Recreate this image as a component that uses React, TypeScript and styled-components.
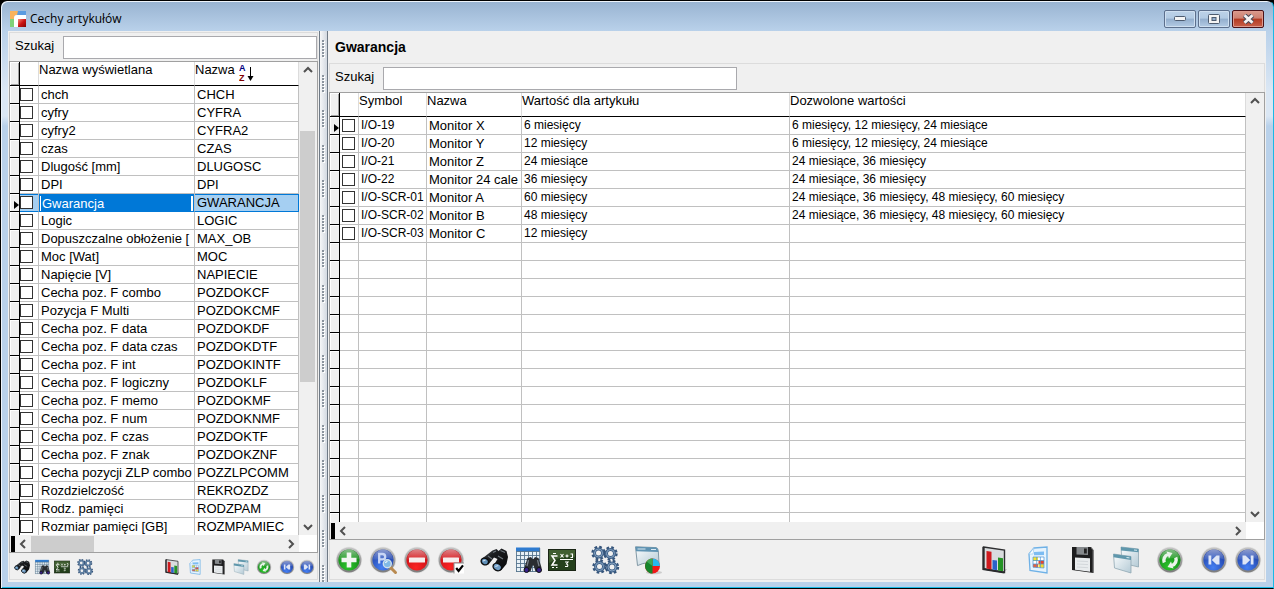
import React from "react";
import styled, { createGlobalStyle, css } from "styled-components";

const SANS = '"Liberation Sans", Arial, sans-serif';

const GlobalStyle = createGlobalStyle`
  * { box-sizing: border-box; }
  body { margin: 0; background: #000; font-family: ${SANS}; font-size: 13px; color: #000; }
  button, input { font: inherit; color: inherit; padding: 0; margin: 0; }
  button { cursor: pointer; }
`;

/* ---------- window frame ---------- */

const Window = styled.main`
  height: 100vh;
  display: flex;
  flex-direction: column;
  padding: 0 7px 6px 7px;
  border: 1px solid #000;
  border-right-color: #19b9e6;
  border-radius: 7px 7px 0 0;
  box-shadow: inset 1px 1px 0 #eef4fb, inset 0 -1px 0 #19b9e6;
  background: linear-gradient(#98b3d1 0, #b9d1ea 30px, #dbe7f4 90px, #dbe7f4 115px, #b9d1ea 125px);
`;

const TitleBar = styled.header`
  flex: none;
  height: 30px;
  display: flex;
  align-items: center;
  gap: 4px;
  padding: 6px 2px 0 2px;
`;

const Title = styled.h1`
  flex: 1;
  margin: 0;
  font: 400 12px/18px "Open Sans", "Noto Sans", sans-serif;
`;

const WindowControls = styled.div`
  display: flex;
  gap: 2px;
`;

const WindowButton = styled.button<{ $danger?: boolean }>`
  width: 32px;
  height: 18px;
  display: flex;
  align-items: center;
  justify-content: center;
  border: 1px solid ${(p) => (p.$danger ? "#4b1218" : "#5c6f8c")};
  border-radius: 2px;
  box-shadow: inset 0 0 0 1px ${(p) => (p.$danger ? "#dd9a8e" : "#cfdff0")};
  background: ${(p) =>
    p.$danger
      ? "linear-gradient(#d99a8c 0, #cf8171 45%, #b33a22 50%, #c8604a 100%)"
      : "linear-gradient(#bdd2e8 0, #b2cae3 45%, #93aecd 50%, #b3cbe4 100%)"};
`;

const Body = styled.div`
  flex: 1;
  min-height: 0;
  display: flex;
  background: #f0f0f0;
`;

const Pane = styled.section<{ $side?: boolean }>`
  display: flex;
  flex-direction: column;
  min-width: 0;
  min-height: 0;
  padding: ${(p) => (p.$side ? "1px 1px 2px" : "0 1px 2px")};
  ${(p) => (p.$side ? "flex: none; width: 311px;" : "flex: 1;")}
`;

const Splitter = styled.div`
  flex: none;
  width: 9px;
  border: solid #6f7a86;
  border-width: 0 1px;
  background: linear-gradient(90deg, #f6f7f8, #d3d9e1);
  svg { display: block; width: 100%; height: 100%; }
`;

const PaneTitle = styled.h2`
  flex: none;
  height: 32px;
  margin: 0;
  padding: 0 6px;
  font: 700 14px/32px ${SANS};
`;

const SearchRow = styled.form<{ $side?: boolean }>`
  flex: none;
  display: flex;
  align-items: center;
  gap: 8px;
  height: 29px;
  padding-left: 5px;
  border: 1px solid #dcdcdc;
  border-bottom: 0;
  label { padding-bottom: 3px; line-height: 20px; font-size: 13px; width: 40px; white-space: nowrap; }
  input {
    ${(p) => (p.$side ? "flex: 1; min-width: 0;" : "width: 354px;")}
    height: 23px;
    padding: 0 4px;
    border: 1px solid #a9a9ad;
    border-radius: 0;
    background: #fff;
    outline: none;
  }
`;

/* ---------- data grid ---------- */

const GridFrame = styled.div`
  flex: 1;
  min-height: 0;
  display: grid;
  grid-template-columns: minmax(0, 1fr) 18px;
  grid-template-rows: minmax(0, 1fr) 17px;
  border: 1px solid #a0a0a0;
  background: #f0f0f0;
`;

const GridViewport = styled.div`
  overflow: hidden;
  background: #fff;
`;

const Table = styled.table`
  width: 100%;
  table-layout: fixed;
  border-collapse: separate;
  border-spacing: 0;
`;

const Head = styled.th<{ $gutter?: boolean }>`
  height: 24px;
  padding: 0;
  border-bottom: 1px solid #000;
  border-right: 1px solid #dcdcdc;
  font-weight: 400;
  line-height: 16px;
  text-align: left;
  vertical-align: top;
  white-space: nowrap;
  ${(p) =>
    p.$gutter &&
    css`
      background: #f0f0f0;
      border-right-color: #000;
      box-shadow: inset 1px 1px 0 #fff, inset -1px -1px 0 #a0a0a0;
    `}
`;

const HeadLabel = styled.span`
  display: flex;
  align-items: flex-start;
  gap: 4px;
  svg { margin-top: 2px; }
`;

const Cell = styled.td<{ $small?: boolean }>`
  height: 18px;
  padding: 0 0 0 2px;
  border-right: 1px solid #c0c0c0;
  border-bottom: 1px solid #c0c0c0;
  font-size: ${(p) => (p.$small ? "12px" : "13px")};
  line-height: 17px;
  white-space: nowrap;
  overflow: hidden;
`;

const GutterCell = styled.td`
  height: 18px;
  padding: 0;
  border-right: 1px solid #000;
  border-bottom: 1px solid #000;
  background: #f0f0f0;
  box-shadow: inset 1px 1px 0 #fff;
  svg { display: block; margin: 5px 0 0 4px; }
`;

const CheckCell = styled(Cell)<{ $inset?: boolean }>`
  padding: 0 0 0 ${(p) => (p.$inset ? "2px" : "0")};
`;

const Row = styled.tr<{ $selected?: boolean }>`
  ${(p) =>
    p.$selected &&
    css`
      ${Cell} {
        background: #a5cff2;
        border-bottom-color: #0078d7;
        box-shadow: inset 0 1px 0 #0078d7;
      }
      ${Cell}:nth-child(3) {
        background: #0078d7;
        color: #fff;
      }
      ${Cell}:last-child { border-right-color: #0078d7; }
    `}
`;

const EditCell = styled(Cell)`
  padding: 0 0 0 1px;
`;

const EditMark = styled.span`
  display: block;
  height: 15px;
  margin: 1px 1px 0 0;
  border: solid #fff;
  border-width: 0 2px 0 1px;
  padding-left: 1px;
  line-height: 16px;
`;

const Check = styled.input`
  appearance: none;
  display: block;
  width: 13px;
  height: 13px;
  border: 1px solid #333;
  border-radius: 0;
  background: #fff;
`;

/* ---------- scroll bars ---------- */

const VBar = styled.div`
  display: flex;
  flex-direction: column;
  padding: 0 1px;
  background: #f0f0f0;
`;

const HBar = styled.div`
  display: flex;
  align-items: stretch;
  padding: 1px 0 0 1px;
  background: #f0f0f0;
  &::before { content: ""; width: 4px; background: #000; }
`;

const Corner = styled.div`
  background: #fff;
`;

const BarButton = styled.button`
  flex: none;
  width: 16px;
  height: 16px;
  display: flex;
  align-items: center;
  justify-content: center;
  border: 0;
  background: transparent;
`;

const Track = styled.div<{ $axis: "x" | "y"; $before: number; $thumb: number }>`
  flex: 1;
  display: grid;
  ${(p) =>
    p.$axis === "y"
      ? `grid-template-rows: ${p.$before}fr ${p.$thumb}fr ${100 - p.$before - p.$thumb}fr;`
      : `grid-template-columns: ${p.$before}fr ${p.$thumb}fr ${100 - p.$before - p.$thumb}fr;`}
`;

const Thumb = styled.div<{ $axis: "x" | "y" }>`
  background: #cdcdcd;
  ${(p) => (p.$axis === "y" ? "grid-row: 2; margin-right: 1px;" : "grid-column: 2;")}
`;

/* ---------- toolbars ---------- */

const Toolbar = styled.div<{ $side?: boolean }>`
  flex: none;
  display: flex;
  align-items: center;
  justify-content: space-between;
  height: ${(p) => (p.$side ? "27px" : "40px")};
  padding: ${(p) => (p.$side ? "1px 2px 0 4px" : "0 2px 0 5px")};
  border: 1px solid #dcdcdc;
  border-top: 0;
`;

const ToolSet = styled.div<{ $gap: number }>`
  display: flex;
  align-items: center;
  gap: ${(p) => p.$gap}px;
`;

const ToolButton = styled.button<{ $size: number }>`
  width: ${(p) => p.$size}px;
  height: ${(p) => p.$size}px;
  border: 0;
  background: transparent;
  svg { display: block; width: 100%; height: 100%; overflow: visible; }
`;

/* ---------- drawings ---------- */

const Hidden = styled.svg`
  position: absolute;
  width: 0;
  height: 0;
`;

const Defs = () => (
  <Hidden aria-hidden="true">
    <defs>
      <linearGradient id="ring" x1="0" y1="0" x2="0" y2="1">
        <stop offset="0" stopColor="#c4c4c4" />
        <stop offset="1" stopColor="#7c7c7c" />
      </linearGradient>
      <radialGradient id="green" cx=".45" cy=".8" r=".8">
        <stop offset="0" stopColor="#2cc42c" />
        <stop offset="1" stopColor="#0d7d12" />
      </radialGradient>
      <radialGradient id="blue" cx=".45" cy=".85" r=".85">
        <stop offset="0" stopColor="#457ff2" />
        <stop offset="1" stopColor="#1b389c" />
      </radialGradient>
      <radialGradient id="red" cx=".45" cy=".85" r=".85">
        <stop offset="0" stopColor="#fb2424" />
        <stop offset="1" stopColor="#bd0a12" />
      </radialGradient>
      <linearGradient id="gloss" x1="0" y1="0" x2="0" y2="1">
        <stop offset="0" stopColor="#fff" stopOpacity=".5" />
        <stop offset="1" stopColor="#fff" stopOpacity=".08" />
      </linearGradient>
      <linearGradient id="pane" x1="0" y1="0" x2="1" y2="1">
        <stop offset="0" stopColor="#fbfdfe" />
        <stop offset="1" stopColor="#b4cad5" />
      </linearGradient>
      <linearGradient id="barrel" x1="0" y1="0" x2="1" y2="1">
        <stop offset="0" stopColor="#5b6369" />
        <stop offset=".35" stopColor="#1b1d20" />
        <stop offset="1" stopColor="#08090a" />
      </linearGradient>
      <linearGradient id="redcube" x1="0" y1="0" x2="1" y2="1">
        <stop offset="0" stopColor="#f58a7a" />
        <stop offset=".5" stopColor="#cc1414" />
        <stop offset="1" stopColor="#7d0505" />
      </linearGradient>
    </defs>
  </Hidden>
);

const Ball = ({ fill, children }: { fill: string; children?: React.ReactNode }) => (
  <svg viewBox="0 0 28 28">
    <circle cx="14" cy="14" r="13.2" fill="#e0e0e0" />
    <circle cx="14" cy="14" r="12.4" fill="url(#ring)" />
    <circle cx="14" cy="14" r="10.6" fill={`url(#${fill})`} />
    <path d="M4 13.5a10 10 0 0 1 20 0q-5-2.500-10-1t-10 1z" fill="url(#gloss)" />
    {children}
  </svg>
);

const Plus = () => (
  <Ball fill="green">
    <path d="M11.700 6.500h4.600v5.200h5.200v4.600h-5.200v5.200h-4.600v-5.200H6.500v-4.600h5.200z" fill="#f1f5f1" />
  </Ball>
);
const Preview = () => (
  <Ball fill="blue">
    <path d="M10.200 17.500V8h3.300a2.600 2.600 0 0 1 0 5.400h-3.300" fill="none" stroke="#c9d6f5" strokeWidth="2.300" />
    <path d="M21 21l5.500 5.500" stroke="#b98a50" strokeWidth="3" strokeLinecap="round" />
    <circle cx="18.300" cy="17.800" r="4" fill="#7fb9e6" stroke="#cfe0ec" strokeWidth="1.400" />
    <path d="M16.500 17q.5-1.500 2-1.500" fill="none" stroke="#fff" strokeWidth="1.200" />
  </Ball>
);
const Minus = () => (
  <Ball fill="red">
    <rect x="6" y="11.500" width="16" height="5" rx=".6" fill="#f6eeee" />
  </Ball>
);
const MinusChecked = () => (
  <Ball fill="red">
    <rect x="6" y="11.500" width="16" height="5" rx=".6" fill="#f6eeee" />
    <rect x="17" y="17" width="10" height="10.500" fill="#fff" />
    <path d="M17 27.500V17h10" fill="none" stroke="#8a8a8a" />
    <path d="M19.200 22l2.400 3 4.400-5.600" fill="none" stroke="#000" strokeWidth="2.200" />
  </Ball>
);
const Binoculars = () => (
  <svg viewBox="0 0 28 28">
    <path d="M12.500 4.500l4-1.500 2 2 3-2.500 5 2.500 1.500 6-1.500 7-5 6-6-1-1-5 3-5-3.500-1.500-5.500 7-6-1.500-1-4z" fill="url(#barrel)" />
    <path d="M13 6.500l3-1.500M20.500 4.500l4.500 2M8 10l4 3M18 10l5 3" fill="none" stroke="#6d767d" strokeWidth="1.200" />
    <ellipse cx="4.800" cy="15.500" rx="3.800" ry="3.200" transform="rotate(28 4.800 15.500)" fill="#5f8fb8" stroke="#0c0d0e" strokeWidth="1.400" />
    <ellipse cx="17.300" cy="21" rx="4.400" ry="3.500" transform="rotate(28 17.300 21)" fill="#6f9cc4" stroke="#0c0d0e" strokeWidth="1.400" />
    <path d="M3 15l2.500-1M15.300 20.500l3-1" stroke="#cfe2f2" strokeWidth="1.200" />
  </svg>
);
const TableSearch = () => (
  <svg viewBox="0 0 28 28">
    <rect x="2" y="1.500" width="24" height="24" fill="#e8f1f7" />
    <rect x="2" y="1.500" width="24" height="4" fill="#2e7bd0" />
    <path d="M2 5.500h24M2 9.500h24M2 13.500h24M2 17.500h24M2 21.500h24M2 25.500h24M2.500 5v21M6.500 5v21M10.500 5v21M14.500 5v21M18.500 5v21M22.500 5v21M25.700 2v24" stroke="#56748c" strokeWidth=".9" />
    <path d="M13.500 12l3.500-1 1.500 2h1l1.500-2 3.500 1 3 9.500-1 4h-5l-2-6h-1l-2 6h-5l-1-4z" fill="#2a2d31" />
    <path d="M14.500 14l-1.500 6M23.500 14l1.500 6" stroke="#767e86" strokeWidth="1.300" />
    <circle cx="12.500" cy="24" r="2.500" fill="#37218a" stroke="#111" />
    <circle cx="25" cy="24" r="2.500" fill="#37218a" stroke="#111" />
  </svg>
);
const Board = () => (
  <svg viewBox="0 0 28 28">
    <rect x=".5" y="3.500" width="27" height="21" fill="#24401c" stroke="#1a2515" />
    <path d="M1 4h26v7Q14 9 1 17z" fill="#4d6b3b" opacity=".7" />
    <path d="M9.500 10H4l3 4.500L4 19h5.500" fill="none" stroke="#fff" strokeWidth="1.500" />
    <path d="M5 7.500h3M4 21.500h2M8 21.500h1.500M12 13.500h13" stroke="#fff" strokeWidth="1.200" />
    <path d="M12.500 8l3 3.500M15.500 8l-3 3.500M17.500 10h3M19 8.500v3M22.500 8h2v3.500h-2M17 16h3l-1.500 2q2 .5 1 2.500h-2.500" fill="none" stroke="#fff" strokeWidth="1.100" />
  </svg>
);
const Gear = ({ x, y }: { x: number; y: number }) => (
  <g transform={`translate(${x} ${y})`}>
    <circle r="6" fill="none" stroke="#35547a" strokeWidth="2.400" strokeDasharray="2.600 2.112" />
    <circle r="4" fill="none" stroke="#3f6188" strokeWidth="3" />
    <circle r="4" fill="none" stroke="#86a3c2" strokeWidth="1" />
  </g>
);
const Gears = () => (
  <svg viewBox="0 0 28 28">
    <Gear x={7.5} y={7} />
    <Gear x={19.5} y={7.5} />
    <Gear x={8.5} y={20.5} />
    <Gear x={21} y={21} />
  </svg>
);
const WindowPie = () => (
  <svg viewBox="0 0 28 28">
    <path d="M1.500 .8l20.500 .8q2 .3 2.300 3l.7 13q-11-3-21.500 2z" fill="url(#pane)" stroke="#8299a6" strokeWidth="1" />
    <path d="M1.500 .8l20.500 .8q2 .3 2.300 4.500L2 5.300z" fill="#5f93b2" />
    <path d="M3.500 3h8M17 3.500h5" stroke="#dcebf4" />
    <ellipse cx="20" cy="26.500" rx="8" ry="1.800" fill="#000" opacity=".15" />
    <circle cx="18.500" cy="20" r="7.500" fill="#f01818" />
    <path d="M18.500 20v-7.500a7.500 7.500 0 0 1 7.500 7.500z" fill="#25b9ee" />
    <path d="M18.500 20v7.500a7.500 7.500 0 0 1-7-10q2.500-5 7-5z" fill="#15852b" />
    <path d="M18.500 12.500v7.500l-6-4.500q2-3 6-3z" fill="#5cc06c" opacity=".6" />
  </svg>
);
const BarChart = () => (
  <svg viewBox="0 0 28 28">
    <path d="M22 24l5-1-3 4z" fill="#000" opacity=".2" />
    <path d="M3.500 1l21 3v22.500l-21-3.500z" fill="#d9dcde" stroke="#2e2e30" strokeWidth="1.400" />
    <path d="M3.500 1v22l21 3.500" fill="none" stroke="#29292b" strokeWidth="2.200" />
    <path d="M6.500 5l5 .7v17.800l-5-.9z" fill="#cf1a1e" />
    <path d="M12.500 14l4.500.6v9.700l-4.500-.7z" fill="#2b62c9" />
    <path d="M18 11.500l5 .7v13l-5-.7z" fill="#259325" />
  </svg>
);
const Sheet = () => (
  <svg viewBox="0 0 28 28">
    <path d="M10 2l13-1v26L6 24.500 5 8z" fill="#e6f3fd" stroke="#6fb1e6" strokeWidth="1.300" />
    <path d="M10 2L9 8H5z" fill="#fff" stroke="#9ccbf0" strokeWidth=".7" />
    <path d="M10 6l10-.5v3.500l-10 .3z" fill="#7cbcf2" />
    <path d="M9 11h11v11l-11-.8z" fill="#fff" />
    <path d="M9 11h5v4H9z" fill="#f7e32d" />
    <path d="M14.500 14.500H20v3.500h-5.500z" fill="#e8432c" />
    <path d="M9 18h5v3.500l-5-.3z" fill="#e8603c" />
    <path d="M14.500 18H20v4l-5.500-.4z" fill="#f7d92d" />
    <path d="M9 11h11v11l-11-.8zM9 14.500h11M9 18h11M12.700 11v10.500M16.400 11v10.800" fill="none" stroke="#4b93d3" strokeWidth=".7" />
  </svg>
);
const Floppy = () => (
  <svg viewBox="0 0 28 28">
    <path d="M4 1h19l2.500 3v23L4 24z" fill="#1d1d1e" />
    <path d="M8.500 1h11.500v8l-11.500-.5z" fill="#85898c" />
    <path d="M16 2.500h2.800v5H16z" fill="#222" />
    <path d="M7 11.500l15 .8v13.500l-15-2z" fill="#e9ecee" />
    <path d="M9 15l11 .6M9 18l11 .6M9 21l11 .7" stroke="#cdd2d5" strokeWidth=".8" />
    <path d="M23 1.500l2 3v22" fill="none" stroke="#777" strokeWidth=".8" />
  </svg>
);
const Windows = () => (
  <svg viewBox="0 0 28 28">
    <path d="M9 1l17.500 2v18L10 17z" fill="url(#pane)" stroke="#8fa7b3" strokeWidth=".8" />
    <path d="M9 1l17.500 2v3.300L9 4.500z" fill="#5f97ac" />
    <path d="M1.500 8L19 10.500v16.500L2.500 22z" fill="url(#pane)" stroke="#8fa7b3" strokeWidth=".8" />
    <path d="M1.500 8L19 10.500V14L1.500 11.300z" fill="#5f97ac" />
    <path d="M14.500 11.500l3 .4M22 4l3 .3" stroke="#d8ecf3" />
  </svg>
);
const Refresh = () => (
  <Ball fill="green">
    <path d="M8.300 16.500a6 6 0 0 1 3.700-8M19.700 11.500a6 6 0 0 1-3.700 8" fill="none" stroke="#eaf3ea" strokeWidth="3.400" />
    <path d="M10.500 5.500l6 1.500-3.500 5.500zM17.500 22.500l-6-1.500 3.500-5.500z" fill="#eaf3ea" />
  </Ball>
);
const First = () => (
  <Ball fill="blue">
    <path d="M8.500 9.500h2.800v9H8.500zM19.500 9.500v9h-3l-4.700-4.500 4.700-4.500z" fill="#dfe6f6" />
  </Ball>
);
const Last = () => (
  <Ball fill="blue">
    <path d="M19.500 9.500h-2.800v9h2.800zM8.500 9.500v9h3l4.700-4.500-4.700-4.500z" fill="#dfe6f6" />
  </Ball>
);

const AppLogo = () => (
  <svg width="16" height="16" viewBox="0 0 16 16" aria-hidden="true">
    <path d="M0 0h8v4H5L4 8H0z" fill="#f9b35c" />
    <path d="M8 0h8v4H7z" fill="#5a9be0" />
    <path d="M0 8h4v8H0z" fill="#7fd17a" />
    <path d="M4 16V7q0-3 3-3h9v4H8v8z" fill="#fff" />
    <path d="M8 8h8v8H8z" fill="url(#redcube)" />
  </svg>
);

const ARROWS = { up: "M1 7l4-4 4 4", down: "M1 3l4 4 4-4", left: "M7 1L3 5l4 4", right: "M3 1l4 4-4 4" };
const Arrow = ({ to }: { to: keyof typeof ARROWS }) => (
  <svg width="10" height="10" viewBox="0 0 10 10" aria-hidden="true">
    <path d={ARROWS[to]} fill="none" stroke="#505050" strokeWidth="2" />
  </svg>
);

const RowMarker = () => (
  <svg width="5" height="8" viewBox="0 0 5 8" aria-hidden="true">
    <path d="M0 0l5 4-5 4z" fill="#000" />
  </svg>
);

const SortMark = () => (
  <svg width="17" height="20" viewBox="0 0 17 20" aria-hidden="true">
    <g fontFamily='"Liberation Sans", sans-serif' fontWeight="700" fontSize="9">
      <text x="0" y="7" fill="#000080">A</text>
      <text x="0" y="17" fill="#800000">Z</text>
    </g>
    <path d="M11.500 3v10" stroke="#000" />
    <path d="M8.500 12h6l-3 5z" fill="#000" />
  </svg>
);

const Grip = () => (
  <svg aria-hidden="true">
    <defs>
      <pattern id="grip" width="7" height="35" patternUnits="userSpaceOnUse">
        {[9, 12, 15, 18, 21, 24].map((y) => (
          <g key={y}>
            <rect x="3" y={y + 1} width="2" height="2" fill="#fff" />
            <rect x="2" y={y} width="2" height="2" fill="#8b949e" />
          </g>
        ))}
      </pattern>
    </defs>
    <rect width="100%" height="100%" fill="url(#grip)" />
  </svg>
);

/* ---------- data ---------- */

const FEATURES: [string, string][] = [
  ["chch", "CHCH"],
  ["cyfry", "CYFRA"],
  ["cyfry2", "CYFRA2"],
  ["czas", "CZAS"],
  ["Dlugość [mm]", "DLUGOSC"],
  ["DPI", "DPI"],
  ["Gwarancja", "GWARANCJA"],
  ["Logic", "LOGIC"],
  ["Dopuszczalne obłożenie [", "MAX_OB"],
  ["Moc [Wat]", "MOC"],
  ["Napięcie [V]", "NAPIECIE"],
  ["Cecha poz. F combo", "POZDOKCF"],
  ["Pozycja F Multi", "POZDOKCMF"],
  ["Cecha poz. F data", "POZDOKDF"],
  ["Cecha poz. F data czas", "POZDOKDTF"],
  ["Cecha poz. F int", "POZDOKINTF"],
  ["Cecha poz. F logiczny", "POZDOKLF"],
  ["Cecha poz. F memo", "POZDOKMF"],
  ["Cecha poz. F num", "POZDOKNMF"],
  ["Cecha poz. F czas", "POZDOKTF"],
  ["Cecha poz. F znak", "POZDOKZNF"],
  ["Cecha pozycji ZLP combo", "POZZLPCOMM"],
  ["Rozdzielczość", "REKROZDZ"],
  ["Rodz. pamięci", "RODZPAM"],
  ["Rozmiar pamięci [GB]", "ROZMPAMIEC"],
];
const SELECTED = "Gwarancja";

const SHORT = "6 miesięcy, 12 miesięcy, 24 miesiące";
const MIDDLE = "24 miesiące, 36 miesięcy";
const LONG = "24 miesiące, 36 miesięcy, 48 miesięcy, 60 miesięcy";
const ARTICLES: [string, string, string, string][] = [
  ["I/O-19", "Monitor X", "6 miesięcy", SHORT],
  ["I/O-20", "Monitor Y", "12 miesięcy", SHORT],
  ["I/O-21", "Monitor Z", "24 miesiące", MIDDLE],
  ["I/O-22", "Monitor 24 cale", "36 miesięcy", MIDDLE],
  ["I/O-SCR-01", "Monitor A", "60 miesięcy", LONG],
  ["I/O-SCR-02", "Monitor B", "48 miesięcy", LONG],
  ["I/O-SCR-03", "Monitor C", "12 miesięcy", ""],
];
const BLANK_ROWS = Array.from({ length: 60 }, (_, i) => i);

type Tool = [string, React.ComponentType];
const Tools = ({ size, gap, tools }: { size: number; gap: number; tools: Tool[] }) => (
  <ToolSet $gap={gap}>
    {tools.map(([label, Icon]) => (
      <ToolButton key={label} type="button" $size={size} aria-label={label}>
        <Icon />
      </ToolButton>
    ))}
  </ToolSet>
);

const FIND: Tool[] = [["Szukaj", Binoculars], ["Szukaj w tabeli", TableSearch], ["Obliczenia", Board]];
const GEARS: Tool[] = [["Operacje", Gears]];
const OUTPUT: Tool[] = [
  ["Wykres", BarChart],
  ["Arkusz", Sheet],
  ["Zapisz", Floppy],
  ["Okna", Windows],
  ["Odśwież", Refresh],
];
const NAV: Tool[] = [["Pierwszy", First], ["Ostatni", Last]];

const VScroll = ({ before, thumb }: { before: number; thumb: number }) => (
  <VBar>
    <BarButton type="button" aria-label="W górę"><Arrow to="up" /></BarButton>
    <Track $axis="y" $before={before} $thumb={thumb}>{thumb > 0 && <Thumb $axis="y" />}</Track>
    <BarButton type="button" aria-label="W dół"><Arrow to="down" /></BarButton>
  </VBar>
);
const HScroll = ({ before, thumb }: { before: number; thumb: number }) => (
  <HBar>
    <BarButton type="button" aria-label="W lewo"><Arrow to="left" /></BarButton>
    <Track $axis="x" $before={before} $thumb={thumb}>{thumb > 0 && <Thumb $axis="x" />}</Track>
    <BarButton type="button" aria-label="W prawo"><Arrow to="right" /></BarButton>
  </HBar>
);

const FeaturePane = () => (
  <Pane $side>
    <SearchRow $side>
      <label htmlFor="feature-search">Szukaj</label>
      <input id="feature-search" type="text" />
    </SearchRow>
    <GridFrame>
      <GridViewport>
        <Table>
          <colgroup>
            <col style={{ width: 10 }} />
            <col style={{ width: 19 }} />
            <col style={{ width: 156 }} />
            <col />
          </colgroup>
          <thead>
            <tr>
              <Head $gutter />
              <Head />
              <Head>Nazwa wyświetlana</Head>
              <Head><HeadLabel>Nazwa <SortMark /></HeadLabel></Head>
            </tr>
          </thead>
          <tbody>
            {FEATURES.map(([name, code]) => (
              <Row key={code} $selected={name === SELECTED}>
                <GutterCell>{name === SELECTED && <RowMarker />}</GutterCell>
                <CheckCell><Check type="checkbox" aria-label={name} /></CheckCell>
                {name === SELECTED ? <EditCell><EditMark>{name}</EditMark></EditCell> : <Cell>{name}</Cell>}
                <Cell>{code}</Cell>
              </Row>
            ))}
          </tbody>
        </Table>
      </GridViewport>
      <VScroll before={12} thumb={57} />
      <HScroll before={0} thumb={25} />
      <Corner />
    </GridFrame>
    <Toolbar $side>
      <ToolSet $gap={7}>
        <Tools size={16} gap={4} tools={FIND} />
        <Tools size={16} gap={4} tools={GEARS} />
      </ToolSet>
      <ToolSet $gap={7}>
        <Tools size={16} gap={7} tools={OUTPUT} />
        <Tools size={16} gap={4} tools={NAV} />
      </ToolSet>
    </Toolbar>
  </Pane>
);

const ArticlePane = () => (
  <Pane>
    <PaneTitle>Gwarancja</PaneTitle>
    <SearchRow>
      <label htmlFor="article-search">Szukaj</label>
      <input id="article-search" type="text" />
    </SearchRow>
    <GridFrame>
      <GridViewport>
        <Table>
          <colgroup>
            <col style={{ width: 10 }} />
            <col style={{ width: 19 }} />
            <col style={{ width: 68 }} />
            <col style={{ width: 95 }} />
            <col style={{ width: 268 }} />
            <col />
          </colgroup>
          <thead>
            <tr>
              <Head $gutter />
              <Head />
              <Head>Symbol</Head>
              <Head>Nazwa</Head>
              <Head>Wartość dla artykułu</Head>
              <Head>Dozwolone wartości</Head>
            </tr>
          </thead>
          <tbody>
            {ARTICLES.map(([symbol, name, value, allowed], i) => (
              <Row key={symbol}>
                <GutterCell>{i === 0 && <RowMarker />}</GutterCell>
                <CheckCell $inset><Check type="checkbox" aria-label={symbol} /></CheckCell>
                <Cell $small>{symbol}</Cell>
                <Cell>{name}</Cell>
                <Cell $small>{value}</Cell>
                <Cell $small>{allowed}</Cell>
              </Row>
            ))}
            {BLANK_ROWS.map((n) => (
              <Row key={n}>
                <GutterCell />
                <CheckCell />
                <Cell />
                <Cell />
                <Cell />
                <Cell />
              </Row>
            ))}
          </tbody>
        </Table>
      </GridViewport>
      <VScroll before={0} thumb={0} />
      <HScroll before={0} thumb={0} />
      <Corner />
    </GridFrame>
    <Toolbar>
      <ToolSet $gap={15}>
        <Tools
          size={28}
          gap={6}
          tools={[["Dodaj", Plus], ["Podgląd", Preview], ["Usuń", Minus], ["Usuń zaznaczone", MinusChecked]]}
        />
        <Tools size={28} gap={6} tools={FIND} />
        <Tools size={28} gap={6} tools={GEARS} />
        <Tools size={28} gap={6} tools={[["Analiza", WindowPie]]} />
      </ToolSet>
      <ToolSet $gap={16}>
        <Tools size={28} gap={16} tools={OUTPUT} />
        <Tools size={28} gap={6} tools={NAV} />
      </ToolSet>
    </Toolbar>
  </Pane>
);

export default function App() {
  return (
    <>
      <GlobalStyle />
      <Defs />
      <Window>
        <TitleBar>
          <AppLogo />
          <Title>Cechy artykułów</Title>
          <WindowControls>
            <WindowButton type="button" aria-label="Minimalizuj">
              <svg width="12" height="6"><rect x=".5" y=".5" width="11" height="4" rx="1" fill="#f4f4f4" stroke="#4d5b6f" /></svg>
            </WindowButton>
            <WindowButton type="button" aria-label="Maksymalizuj">
              <svg width="12" height="10">
                <rect x=".5" y=".5" width="11" height="9" rx="1" fill="#f4f4f4" stroke="#4d5b6f" />
                <rect x="4" y="3.500" width="4" height="3" fill="#93aecd" stroke="#4d5b6f" />
              </svg>
            </WindowButton>
            <WindowButton type="button" $danger aria-label="Zamknij">
              <svg width="13" height="10" viewBox="0 0 13 10">
                <path d="M2.500 1.200l8 7.600M10.500 1.200l-8 7.600" stroke="#4a4a58" strokeWidth="4.800" />
                <path d="M2.500 1.200l8 7.600M10.500 1.200l-8 7.600" stroke="#f6f2f2" strokeWidth="2.800" />
              </svg>
            </WindowButton>
          </WindowControls>
        </TitleBar>
        <Body>
          <FeaturePane />
          <Splitter><Grip /></Splitter>
          <ArticlePane />
        </Body>
      </Window>
    </>
  );
}
